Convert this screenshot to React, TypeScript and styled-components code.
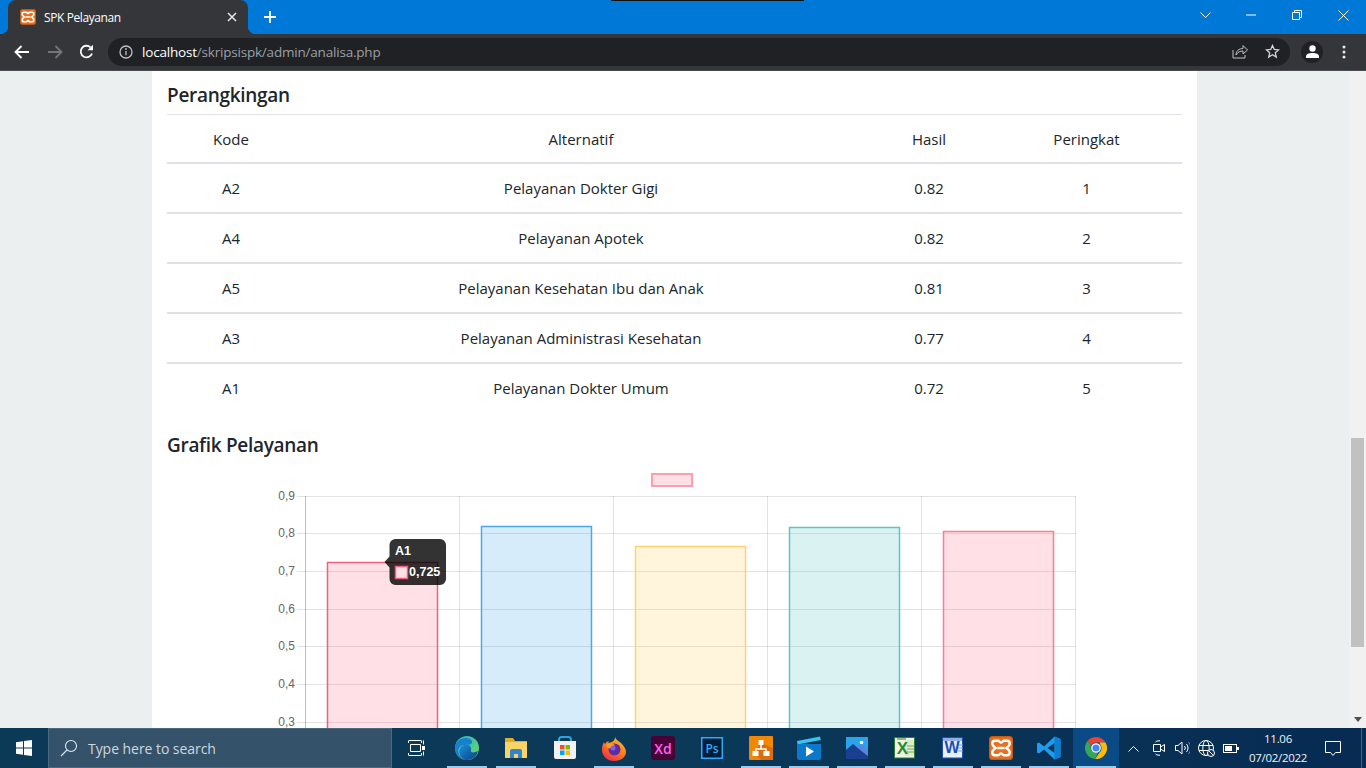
import React from "react";
import styled, { createGlobalStyle } from "styled-components";

const Global = createGlobalStyle`
  html, body { margin: 0; padding: 0; height: 100%; overflow: hidden; background: #ebeff0; }
  #root { height: 100%; }
  * { box-sizing: border-box; }
`;

const Screen = styled.div`
  width: 1366px; height: 768px; display: flex; flex-direction: column; overflow: hidden; position: relative;
  font-family: "Open Sans", "Noto Sans", sans-serif;
`;
const TabStrip = styled.div`
  height: 34px; flex: none; background: #0078d7; display: flex; align-items: stretch; padding-left: 8px; position: relative;
`;
const CameraNotch = styled.div`
  position: absolute; left: 611px; top: 0; width: 193px; height: 1px; background: #111;
`;
const Tab = styled.div`
  width: 240px; background: #35363a; border-radius: 8px 8px 0 0; display: flex; align-items: center; padding: 0 11px 0 12px; color: #fff; position: relative;
  &::before, &::after { content: ""; position: absolute; bottom: 0; width: 8px; height: 8px; background: radial-gradient(circle at var(--c) 0, #0078d7 8px, #35363a 8.5px); }
  &::before { left: -8px; --c: 0; }
  &::after { right: -8px; --c: 100%; }
`;
const TabTitle = styled.span`
  font-size: 12px; margin-left: 8px; flex: 1; letter-spacing: -0.4px;
`;
const NewTab = styled.div`
  width: 44px; display: flex; align-items: center; justify-content: center;
`;
const WindowControls = styled.div`
  margin-left: auto; display: flex; align-items: center; height: 30px;
`;
const WinButton = styled.div<{ $w: number }>`
  width: ${(p) => p.$w}px; display: flex; align-items: center; justify-content: center;
`;
const Toolbar = styled.div`
  height: 37px; flex: none; background: #35363a; border-bottom: 1px solid #4a4b4e; display: flex; align-items: center; padding: 0 0 1px 2px;
`;
const NavButton = styled.div<{ $w: number }>`
  width: ${(p) => p.$w}px; display: flex; align-items: center; justify-content: center;
`;
const Omnibox = styled.div`
  width: 1182px; height: 28px; background: #202124; border-radius: 14px; display: flex; align-items: center; padding: 0 2px 0 11px; margin-left: 3px;
`;
const Url = styled.div`
  font-size: 13.5px; margin-left: 9px; color: #9aa0a6; flex: 1; letter-spacing: -0.2px;
  b { color: #fff; font-weight: 400; }
`;
const OmniIcon = styled.div`
  width: 32px; display: flex; align-items: center; justify-content: center;
`;
const Avatar = styled.div`
  width: 22px; height: 22px; border-radius: 50%; background: #202124; display: flex; align-items: center; justify-content: center; margin-left: 11px;
`;
const Menu = styled.div`
  width: 20px; margin-left: 11px; display: flex; align-items: center; justify-content: center;
`;
const Viewport = styled.div`
  flex: 1; min-height: 0; display: flex; overflow: hidden; background: #ebeff0;
`;
const Page = styled.div`
  flex: 1; display: flex; justify-content: center; overflow: hidden;
`;
const Card = styled.main`
  width: 1045px; background: #fff; padding: 12px 15px 0; color: #212529; flex: none;
`;
const Heading = styled.h4`
  margin: 0; font-size: 19px; line-height: 24px; font-weight: 600; color: #212529; letter-spacing: -0.3px;
`;
const Heading1 = styled(Heading)`
  padding-bottom: 7px; border-bottom: 1px solid #dee2e6;
`;
const Heading2 = styled(Heading)`
  margin-top: 19px;
`;
const Table = styled.table`
  width: 1015px; border-collapse: collapse; table-layout: fixed; font-size: 15px;
`;
const Th = styled.th<{ $w: number }>`
  width: ${(p) => p.$w}px; height: 48px; font-weight: 400; text-align: center; padding: 0; border-bottom: 2px solid #dee2e6;
`;
const Td = styled.td`
  height: 50px; text-align: center; padding: 0; border-bottom: 2px solid #dee2e6;
  tr:last-child > & { border-bottom-color: transparent; }
`;
const ChartFrame = styled.svg`
  display: block; width: 1015px; height: 300px; margin-top: 8px;
  text { font-family: "Liberation Sans", Arial, sans-serif; }
`;
const ScrollTrack = styled.div`
  width: 17px; flex: none; background: #f1f1f1; display: flex; flex-direction: column; align-items: flex-start; padding: 367px 2px 6px;
`;
const ScrollThumb = styled.div`
  width: 13px; height: 209px; background: #c1c1c1;
`;
const ScrollArrow = styled.div`
  margin-top: auto; margin-left: 3px; width: 0; height: 0; border-left: 4px solid transparent; border-right: 4px solid transparent; border-top: 5px solid #505050;
`;
const Taskbar = styled.footer`
  height: 40px; flex: none; display: flex; align-items: stretch; background: linear-gradient(90deg, #0b3a57 0%, #0b3958 50%, #072b53 100%);
`;
const Start = styled.div`
  width: 48px; display: flex; align-items: center; justify-content: center;
`;
const Search = styled.div`
  width: 344px; background: #34526a; border: 1px solid #4d697f; display: flex; align-items: center; padding-left: 11px; color: #cfd8de; font-size: 14px;
`;
const SearchText = styled.span`
  margin-left: 10px; letter-spacing: -0.05px;
`;
const TaskView = styled.div`
  width: 48px; margin-right: 2.5px; display: flex; align-items: center; justify-content: center;
`;
const AppSlot = styled.div<{ $w: number; $running?: boolean; $active?: boolean }>`
  width: ${(p) => p.$w}px; position: relative; display: flex; align-items: center; justify-content: center;
  background: ${(p) => (p.$active ? "#0a4a85" : "transparent")};
  &::after {
    content: ""; position: absolute; bottom: 0; height: 2px; left: 50%; width: 40px; margin-left: -20px;
    background: ${(p) => (p.$running ? "#9bcbea" : "transparent")};
  }
`;
const Tray = styled.div`
  flex: 1; display: flex; align-items: center; color: #fff;
`;
const TrayCell = styled.div<{ $w: number }>`
  width: ${(p) => p.$w}px; display: flex; align-items: center; justify-content: center; height: 100%;
`;
const Clock = styled.div`
  width: 70px; text-align: center; font-size: 11.5px; line-height: 19px; color: #eef3f7; flex: none; letter-spacing: -0.3px;
`;
const TraySep = styled.div`
  margin-left: 8px; width: 1px; height: 100%; background: #3f6386;
`;

const I = { fill: "none", stroke: "#fff", strokeWidth: 1 } as const;

const XamppGlyph = ({ s = 16 }: { s?: number }) => (
  <svg width={s} height={s} viewBox="0 0 20 20">
    <rect x="0.5" y="0.5" width="19" height="19" rx="2.5" fill="#e8711f" />
    <rect x="0.5" y="0.5" width="19" height="19" rx="2.5" fill="none" stroke="#c85a12" />
    <path d="M5 4h2.500c1.200 0 1.500 1.500 2.500 1.500s1.300-1.500 2.500-1.500H15c1.500 0 2.300 1.100 2.300 2.500 0 1.500-1.600 2.500-2.800 3.500 1.200 1 2.800 2 2.800 3.500 0 1.400-.8 2.500-2.300 2.500h-2.500c-1.200 0-1.500-1.500-2.500-1.500s-1.300 1.500-2.500 1.500H5c-1.500 0-2.300-1.100-2.300-2.500 0-1.500 1.600-2.500 2.800-3.500-1.200-1-2.800-2-2.800-3.500C2.700 5.100 3.500 4 5 4zM7 10h6" fill="none" stroke="#fff" strokeWidth="2" />
  </svg>
);

const EdgeIcon = () => (
  <svg width="26" height="26" viewBox="0 0 26 26">
    <defs>
      <linearGradient id="eg" x1="0" y1="0" x2="1" y2="1"><stop offset="0" stopColor="#27b3c9" /><stop offset="1" stopColor="#6fdc5f" /></linearGradient>
      <linearGradient id="eb" x1="0" y1="0" x2="1" y2="1"><stop offset="0" stopColor="#1a8ed6" /><stop offset="1" stopColor="#0b3f8c" /></linearGradient>
    </defs>
    <circle cx="13" cy="13" r="12" fill="url(#eg)" />
    <path d="M1 13C1 7 6 3 12 3c5 0 8 4 5 6-3 2-9-1-12 4-2 3 0 8 4 11C4 23 1 18 1 13z" fill="#1780d0" />
    <path d="M9 24c-5-4-5-12 1-14 4-1 8 1 7 5-1 3 3 3 7 1-1 5-6 9-11 9-1.500 0-3-.3-4-1z" fill="url(#eb)" />
  </svg>
);
const FolderIcon = () => (
  <svg width="24" height="22" viewBox="0 0 24 22">
    <path d="M1 1h8l2 3h12v16a1 1 0 0 1-1 1H2a1 1 0 0 1-1-1z" fill="#e3a92a" />
    <path d="M1 5h22v15a1 1 0 0 1-1 1H2a1 1 0 0 1-1-1z" fill="#f8d467" />
    <path d="M6 21v-7a2 2 0 0 1 2-2h8a2 2 0 0 1 2 2v7h-4v-4h-4v4z" fill="#2f86cf" />
  </svg>
);
const StoreIcon = () => (
  <svg width="24" height="24" viewBox="0 0 24 24">
    <path d="M6 7V3.500C6 2 7 1 8.500 1h7C17 1 18 2 18 3.500V7" fill="none" stroke="#2ca5e0" strokeWidth="2" />
    <path d="M1 5h22v16a2 2 0 0 1-2 2H3a2 2 0 0 1-2-2z" fill="#f2f2f2" />
    <rect x="7" y="9" width="4.500" height="4.500" fill="#f25022" />
    <rect x="12.500" y="9" width="4.500" height="4.500" fill="#7fba00" />
    <rect x="7" y="14.500" width="4.500" height="4.500" fill="#00a4ef" />
    <rect x="12.500" y="14.500" width="4.500" height="4.500" fill="#ffb900" />
  </svg>
);
const FirefoxIcon = () => (
  <svg width="24" height="25" viewBox="0 0 24 25">
    <defs>
      <linearGradient id="ff" x1="0.8" y1="0" x2="0.2" y2="1"><stop offset="0" stopColor="#ffc21f" /><stop offset="0.5" stopColor="#ff7a1a" /><stop offset="1" stopColor="#f0264f" /></linearGradient>
    </defs>
    <path d="M13 1c1 3 4 4 6 6 3 3 5 6 5 9 0 5-5 9-12 9S0 20 0 14c0-4 1-6 2-8 0 1 1 2 1 2 1-2 3-3 4-3-1 1-1 2 0 2 3-1 6-2 6-6z" fill="url(#ff)" />
    <circle cx="12.500" cy="13.500" r="6" fill="#5b2ea6" />
    <path d="M4 9c2-2 6-2 9 0l-4 3c-1 1-4 0-5-3z" fill="#ff9a2e" />
    <circle cx="11" cy="12" r="2.500" fill="#8f5ae8" />
  </svg>
);
const XdIcon = () => (
  <svg width="24" height="24" viewBox="0 0 24 24">
    <rect width="24" height="24" rx="3" fill="#470137" />
    <text x="12" y="17.500" textAnchor="middle" fontSize="14" fontWeight="600" fill="#ff61f6" fontFamily="Open Sans, sans-serif">Xd</text>
  </svg>
);
const PsIcon = () => (
  <svg width="22" height="22" viewBox="0 0 22 22">
    <rect x="0.750" y="0.750" width="20.500" height="20.500" fill="#001e36" stroke="#31a8ff" strokeWidth="1.500" />
    <text x="11" y="15.500" textAnchor="middle" fontSize="12" fontWeight="600" fill="#31a8ff" fontFamily="Open Sans, sans-serif">Ps</text>
  </svg>
);
const DiagramIcon = () => (
  <svg width="24" height="24" viewBox="0 0 24 24">
    <rect width="24" height="24" rx="1" fill="#f08705" />
    <path d="M24 12v11a1 1 0 0 1-1 1H12L5 17l7-10z" fill="#df6c0c" />
    <path d="M12 8v5H7v4M12 13h5v4" fill="none" stroke="#fff" strokeWidth="1.500" />
    <rect x="9.500" y="4" width="5" height="5" rx="0.500" fill="#fff" />
    <rect x="3.500" y="15" width="6" height="5" rx="0.500" fill="#fff" />
    <rect x="14.500" y="15" width="6" height="5" rx="0.500" fill="#fff" />
  </svg>
);
const VideoIcon = () => (
  <svg width="24" height="24" viewBox="0 0 24 24">
    <path d="M0 5l23-4.500.8 3.500L0.500 8.500z" fill="#36c5f0" />
    <path d="M0 8h24v14a2 2 0 0 1-2 2H2a2 2 0 0 1-2-2z" fill="#0b78c9" />
    <path d="M9 10.500l8 5-8 5z" fill="#fff" />
  </svg>
);
const PhotosIcon = () => (
  <svg width="22" height="22" viewBox="0 0 22 22">
    <rect width="22" height="22" fill="#2aa4ea" />
    <circle cx="15.500" cy="5.500" r="1.800" fill="#fff" />
    <path d="M0 13l7-6 15 12v3H0z" fill="#1a3f8f" />
    <path d="M10 9.500L15 7l7 6v6z" fill="#5a85dc" />
  </svg>
);
const ExcelIcon = () => (
  <svg width="22" height="22" viewBox="0 0 22 22">
    <rect x="0.500" y="0.500" width="20" height="20.500" fill="#eef5e6" stroke="#2a7d32" />
    <path d="M11 3h9v16h-9" fill="#dcebc9" />
    <path d="M3 1h9v2H3z" fill="#8fc06a" />
    <path d="M13 9h7M13 12h7M13 15h7" stroke="#7aa860" strokeWidth="1" />
    <text x="8.500" y="16.500" textAnchor="middle" fontSize="17" fontWeight="700" fill="#2a8a2e" fontFamily="Liberation Sans, sans-serif">X</text>
  </svg>
);
const WordIcon = () => (
  <svg width="22" height="22" viewBox="0 0 22 22">
    <rect x="0.500" y="0.500" width="20" height="20.500" fill="#eaf0fb" stroke="#1e4fae" />
    <path d="M1 1h19v3H1z" fill="#8fb0e8" />
    <path d="M16 8h5M16 11h5M16 14h5" stroke="#7c9bd8" strokeWidth="1" />
    <text x="10" y="16" textAnchor="middle" fontSize="16" fontWeight="700" fill="#1a4fb5" fontFamily="Liberation Sans, sans-serif">W</text>
  </svg>
);
const VSCodeIcon = () => (
  <svg width="24" height="24" viewBox="0 0 24 24">
    <path d="M17.500 0.500L23.500 3v18l-6 2.500L7 13.500 2 17.500l-2-1V7.500l2-1 5 4z" fill="#1f9cf0" />
    <path d="M17.500 7L10.500 12l7 5z" fill="#0b3958" />
    <path d="M17.500 0.500L23.500 3v18l-6 2.500z" fill="#0d7fd1" />
  </svg>
);
const ChromeIcon = () => (
  <svg width="22" height="22" viewBox="0 0 22 22">
    <path d="M11 0a11 11 0 0 1 9.500 5.500H11a5.500 5.500 0 0 0-5 3L2.500 4A11 11 0 0 1 11 0z" fill="#ea4335" />
    <path d="M20.500 5.500A11 11 0 0 1 10 22l4.500-6.500a5.500 5.500 0 0 0 1-7.500l-1-2.500z" fill="#fbbc05" />
    <path d="M2.500 4L6 8.500a5.500 5.500 0 0 0 7 7L10 22A11 11 0 0 1 2.500 4z" fill="#34a853" />
    <circle cx="11" cy="11" r="4.200" fill="#4285f4" stroke="#fff" strokeWidth="1.300" />
  </svg>
);

const rows = [
  ["A2", "Pelayanan Dokter Gigi", "0.82", "1"],
  ["A4", "Pelayanan Apotek", "0.82", "2"],
  ["A5", "Pelayanan Kesehatan Ibu dan Anak", "0.81", "3"],
  ["A3", "Pelayanan Administrasi Kesehatan", "0.77", "4"],
  ["A1", "Pelayanan Dokter Umum", "0.72", "5"],
];

const ticks: [string, number][] = [["0,9", 496.5], ["0,8", 533.5], ["0,7", 571.5], ["0,6", 609.5], ["0,5", 646.5], ["0,4", 684.5], ["0,3", 722.5]];
const verticals = [459.5, 613.5, 767.5, 921.5, 1075.5];
const bars = [
  { x: 327.5, top: 562.5, fill: "rgba(255,99,132,.2)", stroke: "#f0607e" },
  { x: 481.5, top: 526.5, fill: "rgba(54,162,235,.2)", stroke: "#4aa9ec" },
  { x: 635.5, top: 546.5, fill: "rgba(255,206,86,.2)", stroke: "#ffd26e" },
  { x: 789.5, top: 527.5, fill: "rgba(75,192,192,.2)", stroke: "#5cc6c6" },
  { x: 943.5, top: 531.5, fill: "rgba(255,99,132,.2)", stroke: "#ff7a95" },
];

const Chart = () => (
  <ChartFrame viewBox="167 465 1015 300">
    <rect x="652" y="474" width="40" height="12" fill="rgba(255,99,132,.2)" stroke="#ff9db0" strokeWidth="2" />
    {ticks.map(([t, y]) => (
      <g key={t}>
        <line x1="297" x2="1076" y1={y} y2={y} stroke="rgba(0,0,0,.11)" />
        <text x="295" y={y + 3} textAnchor="end" fontSize="12" fill="#666">{t}</text>
      </g>
    ))}
    <line x1="305.500" x2="305.500" y1="496" y2="765" stroke="rgba(0,0,0,.25)" />
    {verticals.map((x) => (
      <line key={x} x1={x} x2={x} y1="496" y2="765" stroke="rgba(0,0,0,.11)" />
    ))}
    {bars.map((b) => (
      <rect key={b.x} x={b.x} y={b.top} width="110" height={800 - b.top} fill={b.fill} stroke={b.stroke} strokeWidth="1.500" />
    ))}
    <path d="M395.500 539h44.500a6 6 0 0 1 6 6v34a6 6 0 0 1-6 6h-44.500a6 6 0 0 1-6-6v-11.500l-5-5.500 5-5.500v-11.500a6 6 0 0 1 6-6z" fill="rgba(0,0,0,.8)" />
    <text x="395" y="555" fontSize="12.500" fontWeight="700" fill="#fff">A1</text>
    <rect x="395.500" y="566.500" width="12" height="12" fill="#ffe0e6" stroke="#f0607e" strokeWidth="1.500" />
    <text x="409" y="576" fontSize="12.500" fontWeight="700" fill="#fff">0,725</text>
  </ChartFrame>
);

export default function App() {
  return (
    <Screen>
      <Global />
      <TabStrip>
        <CameraNotch />
        <Tab>
          <XamppGlyph />
          <TabTitle>SPK Pelayanan</TabTitle>
          <svg width="10" height="10" viewBox="0 0 10 10"><path d="M1 1l8 8M9 1l-8 8" stroke="#e8eaed" strokeWidth="1.500" /></svg>
        </Tab>
        <NewTab>
          <svg width="12" height="12" viewBox="0 0 12 12"><path d="M6 0v12M0 6h12" stroke="#fff" strokeWidth="1.800" /></svg>
        </NewTab>
        <WindowControls>
          <WinButton $w={46}><svg width="11" height="6" viewBox="0 0 11 6"><path d="M.5.5l5 5 5-5" {...I} /></svg></WinButton>
          <WinButton $w={46}><svg width="10" height="2" viewBox="0 0 10 2"><path d="M0 1h10" {...I} /></svg></WinButton>
          <WinButton $w={46}><svg width="10" height="10" viewBox="0 0 10 10"><path d="M.5 2.500h7v7h-7zM2.500 2.500v-2h7v7h-2" {...I} /></svg></WinButton>
          <WinButton $w={46}><svg width="11" height="11" viewBox="0 0 11 11"><path d="M.5.5l10 10M10.500.5l-10 10" {...I} /></svg></WinButton>
        </WindowControls>
      </TabStrip>
      <Toolbar>
        <NavButton $w={40}>
          <svg width="16" height="14" viewBox="0 0 16 14"><path d="M15 7H2M7.500 1L1.500 7l6 6" fill="none" stroke="#fff" strokeWidth="1.800" /></svg>
        </NavButton>
        <NavButton $w={25}>
          <svg width="16" height="14" viewBox="0 0 16 14"><path d="M1 7h13M8.500 1l6 6-6 6" fill="none" stroke="#74767a" strokeWidth="1.800" /></svg>
        </NavButton>
        <NavButton $w={38}>
          <svg width="15" height="15" viewBox="0 0 15 15"><path d="M13 9.500A5.800 5.800 0 1 1 11.500 3.300" fill="none" stroke="#fff" strokeWidth="1.800" /><path d="M14 .8v5.400H8.600z" fill="#fff" /></svg>
        </NavButton>
        <Omnibox>
          <svg width="14" height="14" viewBox="0 0 14 14"><circle cx="7" cy="7" r="6" fill="none" stroke="#bdc1c6" strokeWidth="1.300" /><path d="M7 6v4.300" stroke="#bdc1c6" strokeWidth="1.300" /><circle cx="7" cy="4" r=".9" fill="#bdc1c6" /></svg>
          <Url><b>localhost</b>/skripsispk/admin/analisa.php</Url>
          <OmniIcon>
            <svg width="16" height="15" viewBox="0 0 16 15"><path d="M1 6v8h12v-3" fill="none" stroke="#bdc1c6" /><path d="M4 11c0-4 3-6.500 7-6.500V1.500l4.500 4.500-4.500 4V7c-3 0-5 1-7 4z" fill="none" stroke="#bdc1c6" /></svg>
          </OmniIcon>
          <OmniIcon>
            <svg width="15" height="15" viewBox="0 0 15 15"><path d="M7.500 1.500l1.800 4 4.300.4-3.300 2.900 1 4.300-3.800-2.300-3.800 2.300 1-4.300L1.400 5.900l4.300-.4z" fill="none" stroke="#d5d7da" strokeWidth="1.300" /></svg>
          </OmniIcon>
        </Omnibox>
        <Avatar>
          <svg width="13" height="13" viewBox="0 0 13 13"><circle cx="6.500" cy="3.500" r="3.200" fill="#fff" /><path d="M0 13v-1.500C0 9 3 8 6.500 8S13 9 13 11.500V13z" fill="#fff" /></svg>
        </Avatar>
        <Menu>
          <svg width="4" height="14" viewBox="0 0 4 14"><circle cx="2" cy="2" r="1.500" fill="#e8eaed" /><circle cx="2" cy="7" r="1.500" fill="#e8eaed" /><circle cx="2" cy="12" r="1.500" fill="#e8eaed" /></svg>
        </Menu>
      </Toolbar>
      <Viewport>
        <Page>
          <Card>
            <Heading1>Perangkingan</Heading1>
            <Table>
              <thead>
                <tr>
                  <Th $w={128}>Kode</Th>
                  <Th $w={572}>Alternatif</Th>
                  <Th $w={124}>Hasil</Th>
                  <Th $w={191}>Peringkat</Th>
                </tr>
              </thead>
              <tbody>
                {rows.map((r) => (
                  <tr key={r[0]}>{r.map((c, i) => <Td key={i}>{c}</Td>)}</tr>
                ))}
              </tbody>
            </Table>
            <Heading2>Grafik Pelayanan</Heading2>
            <Chart />
          </Card>
        </Page>
        <ScrollTrack>
          <ScrollThumb />
          <ScrollArrow />
        </ScrollTrack>
      </Viewport>
      <Taskbar>
        <Start>
          <svg width="16" height="16" viewBox="0 0 16 16"><path d="M0 2.300L7 1.300v6.300H0zM8 1.100L16 0v7.600H8zM0 8.500h7v6.200L0 13.700zM8 8.500h8V16l-8-1.100z" fill="#fff" /></svg>
        </Start>
        <Search>
          <svg width="18" height="18" viewBox="0 0 18 18"><circle cx="11" cy="7" r="5.500" fill="none" stroke="#e3e8ec" strokeWidth="1.100" /><path d="M7 11l-6 6" stroke="#e3e8ec" strokeWidth="1.100" /></svg>
          <SearchText>Type here to search</SearchText>
        </Search>
        <TaskView>
          <svg width="17" height="16" viewBox="0 0 17 16"><path d="M.5.500h13M.5 15.500h13M2.500 4.500h10v7h-10z" {...I} /><path d="M.5 1v2M13.500 1v2M.5 13v2M13.500 13v2M15.500.5v4M15.500 11.500v4" {...I} /><rect x="14" y="6" width="3" height="4" fill="#fff" /></svg>
        </TaskView>
        <AppSlot $w={49} $running><EdgeIcon /></AppSlot>
        <AppSlot $w={49} $running><FolderIcon /></AppSlot>
        <AppSlot $w={49}><StoreIcon /></AppSlot>
        <AppSlot $w={49} $running><FirefoxIcon /></AppSlot>
        <AppSlot $w={49}><XdIcon /></AppSlot>
        <AppSlot $w={49}><PsIcon /></AppSlot>
        <AppSlot $w={48} $running><DiagramIcon /></AppSlot>
        <AppSlot $w={48} $running><VideoIcon /></AppSlot>
        <AppSlot $w={48} $running><PhotosIcon /></AppSlot>
        <AppSlot $w={48} $running><ExcelIcon /></AppSlot>
        <AppSlot $w={48} $running><WordIcon /></AppSlot>
        <AppSlot $w={48} $running><XamppGlyph s={24} /></AppSlot>
        <AppSlot $w={48} $running><VSCodeIcon /></AppSlot>
        <AppSlot $w={46.5} $active $running><ChromeIcon /></AppSlot>
        <Tray>
          <TrayCell $w={28}><svg width="11" height="7" viewBox="0 0 11 7"><path d="M.5 6.500l5-5 5 5" {...I} /></svg></TrayCell>
          <TrayCell $w={24}><svg width="12" height="16" viewBox="0 0 12 16"><path d="M2.500 2A5 1.500 0 0 1 7 .7M2.500 14A5 1.500 0 0 0 7 15.300M.5 4.500h7v7h-7zM7.500 7l4-2.500v7l-4-2.500" {...I} /></svg></TrayCell>
          <TrayCell $w={22}><svg width="15" height="14" viewBox="0 0 15 14"><path d="M.5 4.500h2.500L7 1v12L3 9.500H.5zM9.500 5a3 3 0 0 1 0 4M11.500 3a6 6 0 0 1 0 8" {...I} /><path d="M13.500 1a9 9 0 0 1 0 12" fill="none" stroke="#6d8aa8" /></svg></TrayCell>
          <TrayCell $w={26}><svg width="17" height="17" viewBox="0 0 17 17"><circle cx="8" cy="8" r="7.500" {...I} /><ellipse cx="8" cy="8" rx="3.200" ry="7.500" {...I} /><path d="M1 5.500h14M1 10.500h14" {...I} /><circle cx="13" cy="13" r="3.500" fill="#0a3058" stroke="#fff" /><path d="M11 11l4 4" {...I} /></svg></TrayCell>
          <TrayCell $w={24}><svg width="16" height="9" viewBox="0 0 16 9"><rect x=".5" y=".5" width="13" height="8" {...I} /><rect x="2" y="2" width="7" height="5" fill="#fff" /><rect x="14" y="3" width="2" height="3" fill="#fff" /></svg></TrayCell>
          <Clock>11.06<br />07/02/2022</Clock>
          <TrayCell $w={40}><svg width="16" height="15" viewBox="0 0 16 15"><path d="M.5.500h15v11h-5l-2.500 3-2.500-3h-5z" {...I} /></svg></TrayCell>
          <TraySep />
        </Tray>
      </Taskbar>
    </Screen>
  );
}
